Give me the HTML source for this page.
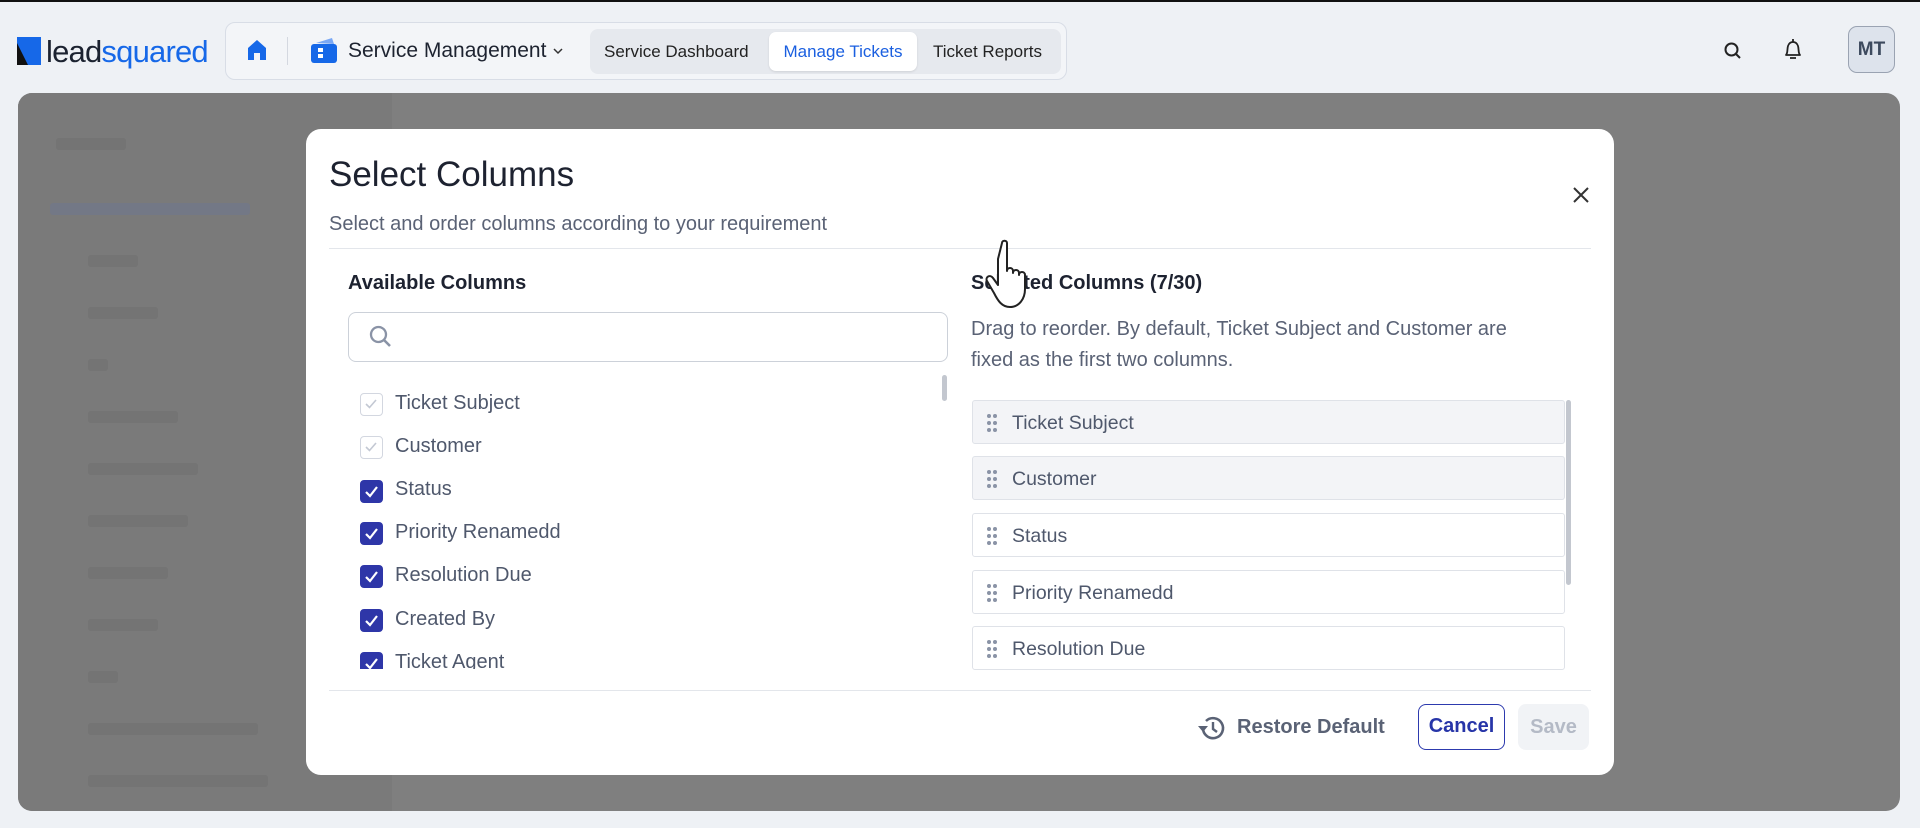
<!DOCTYPE html>
<html><head><meta charset="utf-8">
<style>
*{box-sizing:border-box;margin:0;padding:0}
body{width:1920px;height:828px;overflow:hidden;background:#eef1f5;font-family:"Liberation Sans",sans-serif;position:relative;border-top:2px solid #111}
.abs{position:absolute}
.logo{left:17px;top:32px;height:34px;display:flex;align-items:center}
.nav{left:225px;top:20px;width:842px;height:58px;border:1px solid #d8dde6;border-radius:10px;background:#f3f5f8}
.tabs{left:364px;top:6px;width:471px;height:45px;background:#e6e9ee;border-radius:8px}
.tab{position:absolute;top:0;height:45px;line-height:45px;font-size:17px;color:#222;}
.tab.act{background:#fff;color:#1a5fe0;border-radius:7px;box-shadow:0 1px 2px rgba(0,0,0,.1);text-align:center}
.overlay{left:18px;top:91px;width:1882px;height:718px;background:#7f7f7f;border-radius:14px;overflow:hidden}
.modal{left:306px;top:127px;width:1308px;height:646px;background:#fff;border-radius:15px}
.t{color:#5a6275}
.cb{position:absolute;left:54px;width:23px;height:23px;border-radius:4px;background:#2e36a8}
.cb.dis{background:#fff;border:1.5px solid #d3d7e0}
.item{position:absolute;left:89px;font-size:20px;color:#4f586c}
.row{position:absolute;left:666px;width:593px;height:44px;border:1px solid #dfe2e8;border-radius:3px;background:#fff;font-size:19.5px;color:#4f586c;line-height:44px;padding-left:39px}
.row.g{background:#f3f4f7}
.dots{position:absolute;left:13px;top:12px;width:12px;height:20px}
.fk{position:absolute;height:12px;background:#747474;border-radius:3px}
</style></head><body>

<div class="abs logo">
<svg width="24" height="28" viewBox="0 0 24 28"><rect x="0" y="0" width="24" height="28" fill="#1668e8"/><path d="M0 6 L11 28 L0 28Z" fill="#111"/></svg>
<span style="font-size:31px;color:#1b2230;margin-left:5px;letter-spacing:-0.8px;line-height:1">lead</span><span style="font-size:31px;color:#1668e8;letter-spacing:-0.8px;line-height:1">squared</span>
</div>

<div class="abs nav">
<svg class="abs" style="left:21px;top:16px" width="20" height="22" viewBox="0 0 20 22"><path d="M10 1 L19 9 L19 21 L13 21 L13 14 L7 14 L7 21 L1 21 L1 9Z" fill="#1668e8"/></svg>
<div class="abs" style="left:61px;top:14px;width:1px;height:28px;background:#d4d8e0"></div>
<svg class="abs" style="left:84px;top:15px" width="28" height="26" viewBox="0 0 28 26"><path d="M6 5 L22 0 L24 6Z" fill="#7aa8f5"/><rect x="1" y="6" width="26" height="19" rx="3" fill="#1668e8"/><rect x="8" y="10" width="5" height="4" fill="#fff"/><rect x="8" y="16" width="5" height="4" fill="#fff"/></svg>
<div class="abs" style="left:122px;top:16px;font-size:21px;color:#1d2330">Service Management</div>
<svg class="abs" style="left:326px;top:23px" width="12" height="10" viewBox="0 0 12 10"><path d="M2 3 L6 7 L10 3" fill="none" stroke="#333" stroke-width="1.5"/></svg>
<div class="abs tabs">
<div class="tab" style="left:14px">Service Dashboard</div>
<div class="tab act" style="left:179px;width:148px;top:3px;height:39px;line-height:39px">Manage Tickets</div>
<div class="tab" style="left:343px">Ticket Reports</div>
</div>
</div>

<svg class="abs" style="left:1723px;top:39px" width="20" height="20" viewBox="0 0 20 20"><circle cx="8.5" cy="8.5" r="6" fill="none" stroke="#222" stroke-width="2"/><path d="M13 13 L17 17" stroke="#222" stroke-width="2"/></svg>
<svg class="abs" style="left:1782px;top:36px" width="22" height="24" viewBox="0 0 22 24"><path d="M4 17 C6 15 5 11 6 8 C7 5 9 4 11 4 C13 4 15 5 16 8 C17 11 16 15 18 17Z" fill="none" stroke="#222" stroke-width="1.8" stroke-linejoin="round"/><path d="M11 1 V4 M8 20 H14" stroke="#222" stroke-width="1.8"/></svg>
<div class="abs" style="left:1848px;top:24px;width:47px;height:47px;border:1px solid #9aa3b2;border-radius:9px;background:#dde3ec;text-align:center;line-height:45px;font-size:19px;font-weight:bold;color:#3d4a5e">MT</div>

<div class="abs overlay">
<div class="abs" style="left:0;top:0;width:374px;height:718px;background:#7a7a7a"></div>
<div class="fk" style="left:38px;top:45px;width:70px"></div>
<div class="fk" style="left:32px;top:110px;width:200px;background:#737886"></div>
<div class="fk" style="left:70px;top:162px;width:50px"></div>
<div class="fk" style="left:70px;top:214px;width:70px"></div>
<div class="fk" style="left:70px;top:266px;width:20px"></div>
<div class="fk" style="left:70px;top:318px;width:90px"></div>
<div class="fk" style="left:70px;top:370px;width:110px"></div>
<div class="fk" style="left:70px;top:422px;width:100px"></div>
<div class="fk" style="left:70px;top:474px;width:80px"></div>
<div class="fk" style="left:70px;top:526px;width:70px"></div>
<div class="fk" style="left:70px;top:578px;width:30px"></div>
<div class="fk" style="left:70px;top:630px;width:170px"></div>
<div class="fk" style="left:70px;top:682px;width:180px"></div>
</div>

<div class="abs modal">
<div class="abs" style="left:23px;top:26px;font-size:35px;color:#1d2230">Select Columns</div>
<div class="abs t" style="left:23px;top:84px;font-size:20px">Select and order columns according to your requirement</div>
<svg class="abs" style="left:1266px;top:57px" width="18" height="18" viewBox="0 0 18 18"><path d="M2 2 L16 16 M16 2 L2 16" stroke="#333" stroke-width="2"/></svg>
<div class="abs" style="left:23px;top:119px;width:1262px;height:1px;background:#e3e6eb"></div>

<div class="abs" style="left:42px;top:143px;font-size:20px;font-weight:bold;color:#1d2230">Available Columns</div>
<div class="abs" style="left:42px;top:183px;width:600px;height:50px;border:1px solid #ccd1d9;border-radius:8px">
<svg class="abs" style="left:19px;top:11px" width="26" height="26" viewBox="0 0 26 26"><circle cx="10.5" cy="10.5" r="7.5" fill="none" stroke="#8a93a6" stroke-width="2.3"/><path d="M16 16 L22 22" stroke="#8a93a6" stroke-width="2.6"/></svg>
</div>
<div class="abs" style="left:636px;top:246px;width:5px;height:26px;border-radius:3px;background:#c3c7cf"></div>

<div class="abs" style="left:0;top:250px;width:640px;height:290px;overflow:hidden">
<div class="cb dis" style="top:14px"><svg width="20" height="20" viewBox="0 0 20 20"><path d="M5 10 L8.5 13.5 L15 6" fill="none" stroke="#c3c8d3" stroke-width="1.6"/></svg></div>
<div class="item" style="top:13px">Ticket Subject</div>
<div class="cb dis" style="top:57px"><svg width="20" height="20" viewBox="0 0 20 20"><path d="M5 10 L8.5 13.5 L15 6" fill="none" stroke="#c3c8d3" stroke-width="1.6"/></svg></div>
<div class="item" style="top:56px">Customer</div>
<div class="cb" style="top:101px"><svg width="23" height="23" viewBox="0 0 23 23"><path d="M6 12 L10 16 L17 7" fill="none" stroke="#fff" stroke-width="2.2"/></svg></div>
<div class="item" style="top:99px">Status</div>
<div class="cb" style="top:143px"><svg width="23" height="23" viewBox="0 0 23 23"><path d="M6 12 L10 16 L17 7" fill="none" stroke="#fff" stroke-width="2.2"/></svg></div>
<div class="item" style="top:142px">Priority Renamedd</div>
<div class="cb" style="top:186px"><svg width="23" height="23" viewBox="0 0 23 23"><path d="M6 12 L10 16 L17 7" fill="none" stroke="#fff" stroke-width="2.2"/></svg></div>
<div class="item" style="top:185px">Resolution Due</div>
<div class="cb" style="top:230px"><svg width="23" height="23" viewBox="0 0 23 23"><path d="M6 12 L10 16 L17 7" fill="none" stroke="#fff" stroke-width="2.2"/></svg></div>
<div class="item" style="top:229px">Created By</div>
<div class="cb" style="top:273px"><svg width="23" height="23" viewBox="0 0 23 23"><path d="M6 12 L10 16 L17 7" fill="none" stroke="#fff" stroke-width="2.2"/></svg></div>
<div class="item" style="top:272px">Ticket Agent</div>
</div>

<div class="abs" style="left:665px;top:143px;font-size:20px;font-weight:bold;color:#1d2230">Selected Columns (7/30)</div>
<div class="abs t" style="left:665px;top:185px;width:600px;font-size:20px;line-height:31px">Drag to reorder. By default, Ticket Subject and Customer are<br>fixed as the first two columns.</div>

<div class="row g" style="top:271px"><svg class="dots" viewBox="0 0 12 20"><g fill="#8a93a6"><circle cx="3" cy="3" r="2"/><circle cx="9" cy="3" r="2"/><circle cx="3" cy="10" r="2"/><circle cx="9" cy="10" r="2"/><circle cx="3" cy="17" r="2"/><circle cx="9" cy="17" r="2"/></g></svg>Ticket Subject</div>
<div class="row g" style="top:327px"><svg class="dots" viewBox="0 0 12 20"><g fill="#8a93a6"><circle cx="3" cy="3" r="2"/><circle cx="9" cy="3" r="2"/><circle cx="3" cy="10" r="2"/><circle cx="9" cy="10" r="2"/><circle cx="3" cy="17" r="2"/><circle cx="9" cy="17" r="2"/></g></svg>Customer</div>
<div class="row" style="top:384px"><svg class="dots" viewBox="0 0 12 20"><g fill="#8a93a6"><circle cx="3" cy="3" r="2"/><circle cx="9" cy="3" r="2"/><circle cx="3" cy="10" r="2"/><circle cx="9" cy="10" r="2"/><circle cx="3" cy="17" r="2"/><circle cx="9" cy="17" r="2"/></g></svg>Status</div>
<div class="row" style="top:441px"><svg class="dots" viewBox="0 0 12 20"><g fill="#8a93a6"><circle cx="3" cy="3" r="2"/><circle cx="9" cy="3" r="2"/><circle cx="3" cy="10" r="2"/><circle cx="9" cy="10" r="2"/><circle cx="3" cy="17" r="2"/><circle cx="9" cy="17" r="2"/></g></svg>Priority Renamedd</div>
<div class="row" style="top:497px"><svg class="dots" viewBox="0 0 12 20"><g fill="#8a93a6"><circle cx="3" cy="3" r="2"/><circle cx="9" cy="3" r="2"/><circle cx="3" cy="10" r="2"/><circle cx="9" cy="10" r="2"/><circle cx="3" cy="17" r="2"/><circle cx="9" cy="17" r="2"/></g></svg>Resolution Due</div>
<div class="abs" style="left:1260px;top:271px;width:5px;height:185px;border-radius:3px;background:#c3c7cf"></div>

<div class="abs" style="left:23px;top:561px;width:1262px;height:1px;background:#e3e6eb"></div>
<svg class="abs" style="left:891px;top:584px" width="30" height="30" viewBox="0 0 30 30"><path d="M6 15 A10 10 0 1 0 9 8" fill="none" stroke="#5a6275" stroke-width="2.6"/><path d="M1 13 L6 19 L11 13Z" fill="#5a6275"/><path d="M16 9 V16 L20 19" fill="none" stroke="#5a6275" stroke-width="2.4"/></svg>
<div class="abs t" style="left:931px;top:587px;font-size:20px;font-weight:bold">Restore Default</div>
<div class="abs" style="left:1112px;top:575px;width:87px;height:46px;border:1.5px solid #2d3aae;border-radius:8px;text-align:center;line-height:43px;font-size:20px;font-weight:bold;color:#2735a8">Cancel</div>
<div class="abs" style="left:1212px;top:575px;width:71px;height:46px;border-radius:8px;background:#f1f3f6;text-align:center;line-height:46px;font-size:20px;font-weight:bold;color:#b4bac6">Save</div>

<svg class="abs" style="left:678px;top:110px" width="60" height="72" viewBox="0 0 60 72"><path d="M18 4 C18 1 23 1 23 4 V32 C23 28 29 28 29 32 V34 C29 30 35 30 35 34 V36 C35 32 41 32 41 36 V50 C41 60 35 68 26 68 C18 68 14 62 10 54 L3 42 C1 38 6 35 9 39 L14 46 V20 Z" fill="#fff" stroke="#222" stroke-width="2" stroke-linejoin="round"/></svg>
</div>
</body></html>
